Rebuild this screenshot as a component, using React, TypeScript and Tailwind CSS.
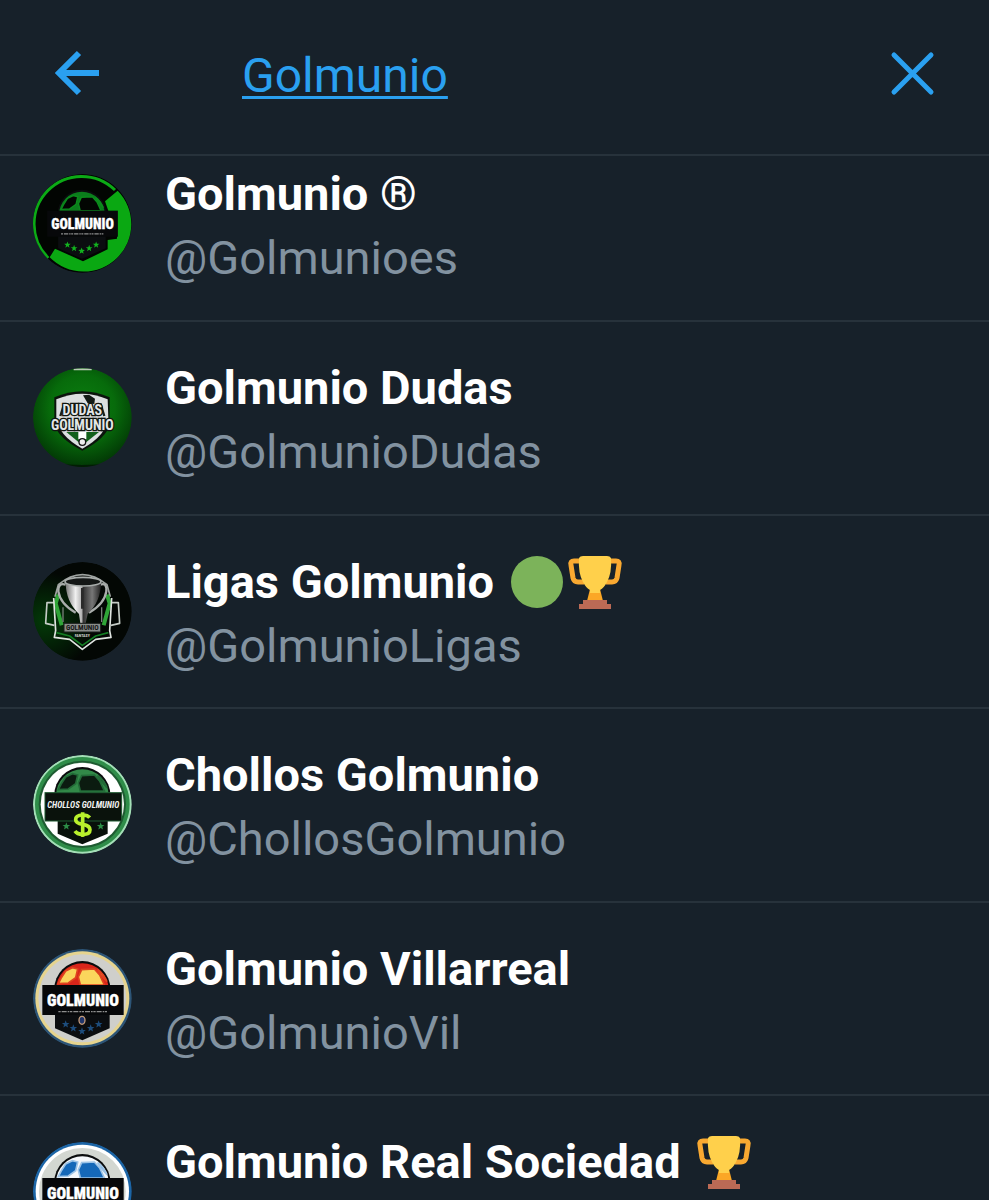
import { useState } from 'react';
import type { ReactNode } from 'react';

type Account = {
  name: string;
  handle: string;
  avatar: ReactNode;
  emojis?: ('circle' | 'trophy')[];
};

const LETTERING = '"Roboto Condensed", Roboto, sans-serif';

function star(cx: number, cy: number, r: number) {
  return Array.from({ length: 10 }, (_, i) => {
    const radius = i % 2 ? r * 0.42 : r;
    const angle = (Math.PI / 5) * i - Math.PI / 2;
    return `${cx + radius * Math.cos(angle)},${cy + radius * Math.sin(angle)}`;
  }).join(' ');
}

function Ball({ fill, patch, line }: { fill: string; patch: string; line: string }) {
  return (
    <g>
      <circle cx="148" cy="120" r="84" fill="#0a0c0d" />
      <circle cx="148" cy="122" r="79" fill={fill} />
      <g fill={patch} stroke={line} strokeWidth="5">
        <path d="M84 88 L98 66 L118 56 L134 60 L128 86 L106 102 L76 104 Z" />
        <path d="M146 62 L184 60 L200 78 L214 108 L142 108 L136 84 Z" />
        <path d="M194 62 Q212 74 222 98 L204 78 Z" />
      </g>
    </g>
  );
}

function Crest({ ball, stars, badge }: { ball: ReactNode; stars: string; badge?: boolean }) {
  return (
    <g>
      {ball}
      <path d="M66 190 H230 V238 L148 274 L66 238 Z" fill="#0b0d10" />
      <rect x="28" y="108" width="244" height="90" fill="#07080a" />
      <text x="150" y="170" textAnchor="middle" fontFamily={LETTERING} fontWeight="900" fontSize="48" fill="#fff" stroke="#fff" strokeWidth="1">
        GOLMUNIO
      </text>
      <path d="M76 188 H222" stroke="#8d8d8d" strokeWidth="4" strokeDasharray="7 3 15 3 5 2" />
      {badge && <ellipse cx="147" cy="214" rx="9" ry="12" fill="#20356b" stroke="#c39a78" strokeWidth="4" />}
      <polygon points={star(98, 226, 12)} fill={stars} />
      <polygon points={star(121, 238, 12)} fill={stars} />
      <polygon points={star(147, 247, 12)} fill={stars} />
      <polygon points={star(173, 238, 12)} fill={stars} />
      <polygon points={star(197, 226, 12)} fill={stars} />
    </g>
  );
}

function AvatarSvg({ label, children }: { label: string; children: ReactNode }) {
  return (
    <svg viewBox="0 0 297 297" role="img" aria-label={label} className="mt-3 size-[99px] shrink-0 rounded-full">
      {children}
    </svg>
  );
}

function GolmunioAvatar() {
  return (
    <AvatarSvg label="Golmunio">
      <circle cx="148" cy="148" r="148" fill="#020502" />
      <path d="M46 252 A142 142 0 0 1 246 48" fill="none" stroke="#0caa16" strokeWidth="9" />
      <path d="M254 50 L216 82 L228 116 L252 118 V194 L224 198 V226 L150 262 L66 224 L50 250 A142 142 0 0 0 254 50 Z" fill="#0aa812" />
      <g transform="translate(18 16) scale(.87)">
        <Crest ball={<Ball fill="#0b7d1c" patch="#020502" line="#0b8a1c" />} stars="#12b31e" />
      </g>
    </AvatarSvg>
  );
}

function DudasAvatar() {
  return (
    <AvatarSvg label="Golmunio Dudas">
      <defs>
        <radialGradient id="dudas-bg" cx="50%" cy="40%" r="60%">
          <stop offset="0" stopColor="#0b7f10" />
          <stop offset=".55" stopColor="#076b0b" />
          <stop offset="1" stopColor="#023805" />
        </radialGradient>
      </defs>
      <circle cx="148" cy="148" r="148" fill="url(#dudas-bg)" />
      <path d="M122 4 H176" stroke="#b9c9b5" strokeWidth="5" />
      <path d="M52 290 Q148 304 244 290" stroke="#021c04" strokeWidth="12" fill="none" />
      <path d="M64 88 Q148 52 230 88 V168 Q222 210 148 248 Q74 210 64 168 Z" fill="#0c130d" />
      <path d="M70 94 Q148 60 224 94 L226 150 Q220 202 148 242 Q76 202 70 150 Z" fill="#dcdfe0" />
      <path d="M150 82 L168 80 L186 92 L184 108 L164 106 Z" fill="#131a16" />
      <path d="M94 106 L82 144 M202 106 L214 144" stroke="#1a211b" strokeWidth="7" />
      <path d="M100 192 H198 L148 232 Z" fill="#12601b" />
      <path d="M136 190 H160 V214 H136 Z" fill="#fff" />
      <circle cx="148" cy="222" r="10" fill="#eee" stroke="#151515" strokeWidth="4" />
      <g textAnchor="middle" fontFamily={LETTERING} fontWeight="700" fill="#e3e6e7" stroke="#101610" strokeWidth="8" paintOrder="stroke">
        <text x="148" y="142" fontSize="42">DUDAS</text>
        <text x="148" y="186" fontSize="42">GOLMUNIO</text>
      </g>
    </AvatarSvg>
  );
}

function LigasAvatar() {
  return (
    <AvatarSvg label="Ligas Golmunio">
      <defs>
        <radialGradient id="ligas-bg" cx="12%" cy="60%" r="50%">
          <stop offset="0" stopColor="#033a08" />
          <stop offset="1" stopColor="#030704" />
        </radialGradient>
        <linearGradient id="ligas-cup">
          <stop offset="0" stopColor="#777" />
          <stop offset=".28" stopColor="#f0f0f0" />
          <stop offset=".45" stopColor="#b4b4b4" />
          <stop offset=".5" stopColor="#333" />
          <stop offset=".75" stopColor="#777" />
          <stop offset="1" stopColor="#222" />
        </linearGradient>
      </defs>
      <circle cx="148" cy="148" r="148" fill="url(#ligas-bg)" />
      <g fill="none" strokeLinejoin="round">
        <path d="M66 104 L76 68 Q148 8 222 68 L232 104" stroke="#9ea3a0" strokeWidth="5" />
        <path d="M66 122 H42 L38 184 L64 190 M232 122 H256 L260 184 L234 190" stroke="#c5ccc6" strokeWidth="5" />
        <path d="M76 98 L68 124 L86 190 M222 98 L230 124 L212 190" stroke="#2fa437" strokeWidth="12" />
        <path d="M62 108 L68 206 L64 226 L110 232 L148 262 L188 232 L234 226 L230 206 L236 108" stroke="#dfe4e0" strokeWidth="5" />
        <path d="M70 212 L110 222 L148 250 L188 222 L226 212" stroke="#147d24" strokeWidth="5" />
        <path d="M98 68 Q76 60 76 88 Q82 126 128 152 M202 68 Q222 60 220 88 Q214 126 168 152" stroke="#a9adab" strokeWidth="7" />
        <path d="M90 136 V180 M206 136 V180" stroke="#777f79" strokeWidth="4" />
      </g>
      <path d="M98 60 Q148 42 204 60 Q204 118 164 156 L158 184 H142 L138 156 Q98 118 98 60 Z" fill="url(#ligas-cup)" />
      <ellipse cx="150" cy="59" rx="54" ry="13" fill="#141716" stroke="#a8adab" strokeWidth="5" />
      <path d="M148 78 V140" stroke="#2a2a2a" strokeWidth="8" />
      <rect x="93" y="184" width="110" height="26" fill="#888c89" stroke="#1b1f1c" strokeWidth="3" />
      <g textAnchor="middle" fontFamily={LETTERING} fontWeight="700">
        <text x="148" y="205" fontSize="22" fill="#151515">GOLMUNIO</text>
        <text x="148" y="224" fontSize="12" fill="#cfd3d0">FANTASY</text>
      </g>
    </AvatarSvg>
  );
}

function ChollosAvatar() {
  return (
    <AvatarSvg label="Chollos Golmunio">
      <circle cx="148" cy="148" r="148" fill="#a4dfb7" />
      <circle cx="148" cy="148" r="142" fill="#2f8d49" />
      <circle cx="148" cy="148" r="131" fill="#1e5b31" />
      <circle cx="148" cy="148" r="125" fill="#fff" />
      <Ball fill="#328948" patch="#0b1b10" line="#226a37" />
      <path d="M74 192 H224 V236 L148 268 L74 236 Z" fill="#08100a" />
      <rect x="36" y="113" width="230" height="85" fill="#0a120c" stroke="#1f5b31" strokeWidth="3" />
      <text x="151" y="160" textAnchor="middle" fontFamily={LETTERING} fontWeight="700" fontStyle="italic" fontSize="26" fill="#f2f2f2">
        CHOLLOS GOLMUNIO
      </text>
      <polygon points={star(100, 214, 12)} fill="#2c8c46" />
      <polygon points={star(203, 214, 12)} fill="#2c8c46" />
      <path
        d="M149 172 V246 M170 188 Q164 180 149 180 Q128 180 128 194 Q128 204 149 208 Q171 212 171 224 Q171 238 149 238 Q132 238 126 228"
        fill="none"
        stroke="#b8f02c"
        strokeWidth="11"
      />
    </AvatarSvg>
  );
}

function VillarrealAvatar() {
  return (
    <AvatarSvg label="Golmunio Villarreal">
      <circle cx="148" cy="148" r="148" fill="#2d5577" />
      <circle cx="148" cy="148" r="141" fill="#e6d48e" />
      <circle cx="148" cy="148" r="132" fill="#cfcfcb" />
      <Crest ball={<Ball fill="#d9251a" patch="#fbd55c" line="#e0431f" />} stars="#1d4c7c" badge />
    </AvatarSvg>
  );
}

function RealSociedadAvatar() {
  return (
    <AvatarSvg label="Golmunio Real Sociedad">
      <circle cx="148" cy="148" r="148" fill="#1c65a6" />
      <circle cx="148" cy="148" r="140" fill="#fff" />
      <circle cx="148" cy="148" r="130" fill="#d3d7d1" />
      <Crest ball={<Ball fill="#f4f7fa" patch="#1568b8" line="#9cc3e6" />} stars="#1568b8" />
    </AvatarSvg>
  );
}

function CircleEmoji() {
  return (
    <svg viewBox="0 0 58 58" role="img" aria-label="green circle" className="size-[58px] shrink-0">
      <circle cx="29" cy="29" r="26" fill="#7cb35a" />
    </svg>
  );
}

function TrophyEmoji() {
  return (
    <svg viewBox="0 0 58 58" role="img" aria-label="trophy" className="size-[58px] shrink-0">
      <path d="M15 8 H8 Q4 8 5 12 L7 25 Q8 29 12 29 H18 M43 8 H50 Q54 8 53 12 L51 25 Q50 29 46 29 H40" fill="none" stroke="#f9a931" strokeWidth="5" />
      <path d="M24 36 H34 L37 48 H21 Z" fill="#fba726" />
      <path d="M13 5 Q14 3 17 3 H41 Q44 3 45 5 Q46 20 41 29 Q38 35 34 37 V40 H24 V37 Q20 35 17 29 Q12 20 13 5 Z" fill="#ffd04b" />
      <path d="M17 47 H41 V51 H45 V56 H13 V51 H17 Z" fill="#bb6a55" />
    </svg>
  );
}

const accounts: Account[] = [
  { name: 'Golmunio ®', handle: '@Golmunioes', avatar: <GolmunioAvatar /> },
  { name: 'Golmunio Dudas', handle: '@GolmunioDudas', avatar: <DudasAvatar /> },
  { name: 'Ligas Golmunio', handle: '@GolmunioLigas', avatar: <LigasAvatar />, emojis: ['circle', 'trophy'] },
  { name: 'Chollos Golmunio', handle: '@ChollosGolmunio', avatar: <ChollosAvatar /> },
  { name: 'Golmunio Villarreal', handle: '@GolmunioVil', avatar: <VillarrealAvatar /> },
  { name: 'Golmunio Real Sociedad', handle: '', avatar: <RealSociedadAvatar />, emojis: ['trophy'] },
];

function AccountRow({ account }: { account: Account }) {
  return (
    <li className="border-b-2 border-[#27323b] pt-[34px] pb-[29px] first:pt-[6px] first:pb-[30px] even:pb-[30px]">
      <a href={`#${account.name}`} className="flex gap-[33px] pl-[33px]">
        {account.avatar}
        <div className="min-w-0 flex-1 text-[47px] leading-[64px] whitespace-nowrap">
          <div className="flex h-16 items-center font-bold text-white">
            <span>{account.name}</span>
            {account.emojis && (
              <span className="flex pl-[14px]">
                {account.emojis.map((emoji) => (emoji === 'circle' ? <CircleEmoji key={emoji} /> : <TrophyEmoji key={emoji} />))}
              </span>
            )}
          </div>
          {account.handle && <p className="text-[#8292a0]">{account.handle}</p>}
        </div>
      </a>
    </li>
  );
}

export default function App() {
  const [query, setQuery] = useState('Golmunio');

  return (
    <div className="flex h-screen flex-col overflow-hidden bg-[#17212a] font-[Roboto,sans-serif]">
      <header className="flex shrink-0 items-start border-b-2 border-[#27323b] px-[48px] pt-[44px] pb-[46px] text-[#2aa0f0]">
        <button type="button" aria-label="Back" className="flex h-[58px] w-[58px] items-center justify-center">
          <svg viewBox="0 0 58 58" fill="none" stroke="currentColor" strokeWidth="6" className="size-[58px]">
            <path d="M51 29 H11 M31 9 L11 29 L31 49" />
          </svg>
        </button>
        <input
          type="text"
          aria-label="Search"
          value={query}
          onChange={(e) => setQuery(e.target.value)}
          className="ml-[136px] h-16 min-w-0 flex-1 bg-transparent text-[48px] leading-[64px] underline decoration-3 underline-offset-4 outline-none"
        />
        <button type="button" aria-label="Clear" onClick={() => setQuery('')} className="flex h-[58px] w-[58px] items-center justify-center">
          <svg viewBox="0 0 58 58" fill="none" stroke="currentColor" strokeWidth="5" strokeLinecap="round" className="size-[58px]">
            <path d="M11 11 L48 48 M48 11 L11 48" />
          </svg>
        </button>
      </header>
      <ul className="min-h-0 flex-1 overflow-hidden">
        {accounts.map((account) => (
          <AccountRow key={account.name} account={account} />
        ))}
      </ul>
    </div>
  );
}
